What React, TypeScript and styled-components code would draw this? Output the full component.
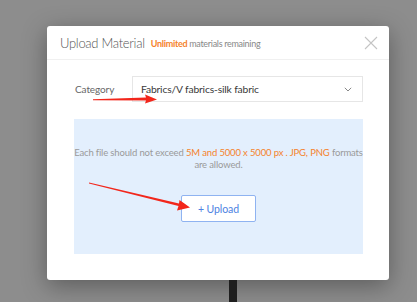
import React from "react";
import styled, { createGlobalStyle } from "styled-components";

const Global = createGlobalStyle`
  html, body { margin: 0; padding: 0; }
  body { background: #8d8d8d; font-family: Lato, "Noto Sans", Arial, sans-serif; }
`;

const Page = styled.div`
  position: relative;
  width: 417px;
  height: 302px;
  overflow: hidden;
  background: #8d8d8d;
  display: flex;
  flex-direction: column;
  padding: 26px 0 0 47px;
  box-sizing: border-box;
`;

const Modal = styled.div`
  width: 342px;
  height: 254px;
  background: #fff;
  border-radius: 3px;
  box-shadow: 0 6px 24px rgba(0, 0, 0, 0.35);
  display: flex;
  flex-direction: column;
  flex-shrink: 0;
`;

const Header = styled.div`
  height: 33px;
  border-bottom: 1px solid #f0f0f0;
  display: flex;
  align-items: center;
  padding: 0 10px 0 13px;
  box-sizing: content-box;
`;

const Title = styled.span`
  font-size: 13px;
  font-weight: 300;
  color: #555;
  letter-spacing: -0.3px;
`;

const Sub = styled.span`
  font-size: 9px;
  color: #888;
  margin-left: 6px;
  margin-top: 2px;
  letter-spacing: -0.3px;
`;

const Orange = styled.span<{ $bold?: boolean }>`
  color: #f5822b;
  font-weight: ${(p) => (p.$bold ? 700 : 400)};
`;

const Close = styled.button`
  margin-left: auto;
  width: 16px;
  height: 16px;
  padding: 0;
  border: none;
  background: none;
  display: flex;
  align-items: center;
  justify-content: center;
`;

const Body = styled.div`
  padding: 16px 26px 0 27px;
  display: flex;
  flex-direction: column;
`;

const FieldRow = styled.div`
  display: flex;
  align-items: center;
  height: 26px;
`;

const Label = styled.label`
  width: 57px;
  font-size: 10px;
  color: #666;
  padding-left: 1px;
  letter-spacing: -0.1px;
`;

const Select = styled.div`
  flex: 1;
  height: 26px;
  box-sizing: border-box;
  border: 1px solid #e6e6e6;
  display: flex;
  align-items: center;
  padding: 0 10px 0 8px;
  font-size: 10.3px;
  letter-spacing: -0.15px;
  color: #3a3a3a;
`;

const Chevron = styled.span`
  margin-left: auto;
  display: flex;
`;

const Drop = styled.div`
  margin-top: 17px;
  height: 135px;
  background: #e3effd;
  display: flex;
  flex-direction: column;
  align-items: center;
  padding-top: 28px;
  box-sizing: border-box;
`;

const Hint = styled.p`
  margin: 0;
  font-size: 9.5px;
  line-height: 12px;
  letter-spacing: -0.15px;
  color: #9a9a9a;
  text-align: center;
  white-space: nowrap;
`;

const UploadBtn = styled.button`
  margin-top: 24px;
  width: 75px;
  height: 27px;
  background: #fff;
  border: 1px solid #8fb3f1;
  border-radius: 2px;
  color: #4d82e2;
  font-family: inherit;
  font-size: 10.5px;
  letter-spacing: -0.1px;
  padding: 0;
`;

const Stand = styled.div`
  width: 8px;
  height: 30px;
  margin-left: 182px;
  background: #1e1e1e;
  flex-shrink: 0;
`;

const Annotations = styled.svg`
  position: absolute;
  left: 0;
  top: 0;
  pointer-events: none;
`;

export default function App() {
  return (
    <>
      <Global />
      <Page>
        <Modal>
          <Header>
            <Title>Upload Material</Title>
            <Sub>
              <Orange $bold>Unlimited</Orange> materials remaining
            </Sub>
            <Close aria-label="close">
              <svg width="14" height="14" viewBox="0 0 14 14">
                <path d="M1 1L13 13M13 1L1 13" stroke="#c4c4c4" strokeWidth="1.1" fill="none" />
              </svg>
            </Close>
          </Header>
          <Body>
            <FieldRow>
              <Label>Category</Label>
              <Select>
                Fabrics/V fabrics-silk fabric
                <Chevron>
                  <svg width="8" height="5" viewBox="0 0 8 5">
                    <path d="M0.8 0.8L4 4L7.2 0.8" stroke="#888" strokeWidth="1" fill="none" />
                  </svg>
                </Chevron>
              </Select>
            </FieldRow>
            <Drop>
              <Hint>
                Each file should not exceed <Orange>5M and 5000 x 5000 px . JPG, PNG</Orange> formats
                <br />
                are allowed.
              </Hint>
              <UploadBtn>+ Upload</UploadBtn>
            </Drop>
          </Body>
        </Modal>
        <Stand />
        <Annotations width="417" height="302" viewBox="0 0 417 302">
          <path d="M93 99.2 L146 97.6 L145 94.5 L157 99.5 L145 103.5 L146 100.6 L93 100.2 Z" fill="#f2261b" />
          <path d="M89 182.6 L179 203.5 L179.5 200 L190 207.5 L177 210.5 L178.5 206 L89 183.6 Z" fill="#f2261b" />
        </Annotations>
      </Page>
    </>
  );
}
